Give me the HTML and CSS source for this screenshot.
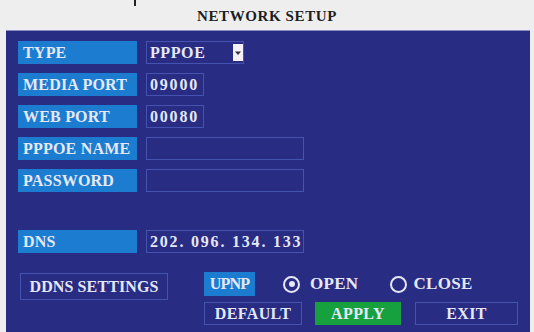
FILE: index.html
```html
<!DOCTYPE html>
<html>
<head>
<meta charset="utf-8">
<link rel="stylesheet" href="styles.css">
</head>
<body>
<div class="screen">
  <div class="mark"></div>
  <div class="header">NETWORK SETUP</div>
  <div class="panel">
    <div class="form">
      <div class="row"><div class="label">TYPE</div><div class="value select">PPPOE<span class="arrow"><svg width="8" height="6" viewBox="0 0 8 6"><path d="M1 1.5h6L4 5z" fill="#333"/></svg></span></div></div>
      <div class="row"><div class="label">MEDIA PORT</div><div class="value short">09000</div></div>
      <div class="row"><div class="label">WEB PORT</div><div class="value short">00080</div></div>
      <div class="row"><div class="label">PPPOE NAME</div><div class="value long"></div></div>
      <div class="row"><div class="label">PASSWORD</div><div class="value long"></div></div>
      <div class="row dns"><div class="label">DNS</div><div class="value long">202. 096. 134. 133</div></div>
    </div>
    <div class="bottom">
      <div class="btn ddns">DDNS SETTINGS</div>
      <div class="right">
        <div class="upnp-row">
          <div class="upnp">UPNP</div>
          <div class="radio on"></div><span class="opt">OPEN</span>
          <div class="radio"></div><span class="opt close">CLOSE</span>
        </div>
        <div class="btns">
          <div class="btn b-default">DEFAULT</div>
          <div class="btn b-apply">APPLY</div>
          <div class="btn b-exit">EXIT</div>
        </div>
      </div>
    </div>
  </div>
</div>
</body>
</html>
```
FILE: styles.css
```css
html, body {
  margin: 0;
  padding: 0;
  background: #eeeeee;
}
.screen {
  position: relative;
  width: 534px;
  height: 332px;
  overflow: hidden;
  background: #eeeeee;
  font-family: "Liberation Serif", serif;
  font-weight: bold;
  white-space: nowrap;
}
.mark {
  position: absolute;
  left: 134px;
  top: 0;
  width: 2px;
  height: 6px;
  background: #222;
}
.header {
  height: 30px;
  line-height: 33px;
  text-align: center;
  font-size: 15px;
  letter-spacing: 0.6px;
  color: #1e1e1e;
}
.panel {
  margin: 0 4px 0 6px;
  height: 302px;
  box-sizing: border-box;
  background: #282c83;
  border-top: 1px solid #8a8cc4;
  padding: 10px 0 0 12px;
  color: #e6e8f8;
}
.form {
  display: flex;
  flex-direction: column;
  gap: 9px;
}
.row {
  display: flex;
  gap: 9px;
  height: 23px;
}
.row.dns {
  margin-top: 29px;
}
.label {
  width: 119px;
  background: #1b7cd0;
  font-size: 16px;
  line-height: 23px;
  padding-left: 5px;
  box-sizing: border-box;
  letter-spacing: 0.2px;
}
.value {
  box-sizing: border-box;
  border: 1px solid #4553b0;
  font-size: 16px;
  line-height: 21px;
  padding-left: 3px;
  letter-spacing: 1.8px;
}
.value.short { width: 58px; }
.value.long { width: 158px; }
.value.select {
  width: 98px;
  display: flex;
  align-items: center;
  letter-spacing: 0.6px;
}
.arrow {
  margin-left: auto;
  margin-right: 0;
  width: 10px;
  height: 17px;
  background: #f2f2f6;
  display: flex;
  align-items: center;
  justify-content: center;
}
.bottom {
  display: flex;
  margin-top: 19px;
}
.btn {
  box-sizing: border-box;
  border: 1px solid #4553b0;
  font-size: 16px;
  text-align: center;
  letter-spacing: 0.4px;
}
.ddns {
  margin-left: 2px;
  width: 148px;
  height: 27px;
  line-height: 25px;
  margin-top: 1px;
  letter-spacing: 0.1px;
}
.right {
  margin-left: 36px;
  display: flex;
  flex-direction: column;
  gap: 6px;
}
.upnp-row {
  display: flex;
  align-items: center;
  height: 24px;
}
.upnp {
  background: #1b7cd0;
  width: 51px;
  height: 24px;
  line-height: 24px;
  font-size: 16px;
  text-align: center;
  letter-spacing: -0.8px;
}
.radio {
  width: 17px;
  height: 17px;
  box-sizing: border-box;
  border: 2.5px solid #e6e8f8;
  border-radius: 50%;
  margin-left: 28px;
  position: relative;
}
.radio + .opt { margin-left: 10px; }
.radio + .opt.close { margin-left: 6px; }
.radio.on::after {
  content: "";
  position: absolute;
  left: 50%;
  top: 50%;
  width: 6px;
  height: 6px;
  margin: -3px 0 0 -3px;
  border-radius: 50%;
  background: #e6e8f8;
}
.opt {
  font-size: 17px;
  letter-spacing: 0.3px;
}
.radio:nth-of-type(3) { margin-left: 32px; }
.btns {
  display: flex;
  gap: 12px;
}
.btns .btn {
  height: 23px;
  line-height: 21px;
}
.b-default { width: 98px; }
.b-apply {
  width: 86px;
  background: #17a03e;
  border-color: #17a03e;
  margin-left: 1px;
}
.b-exit { width: 103px; margin-left: 2px; }
```
